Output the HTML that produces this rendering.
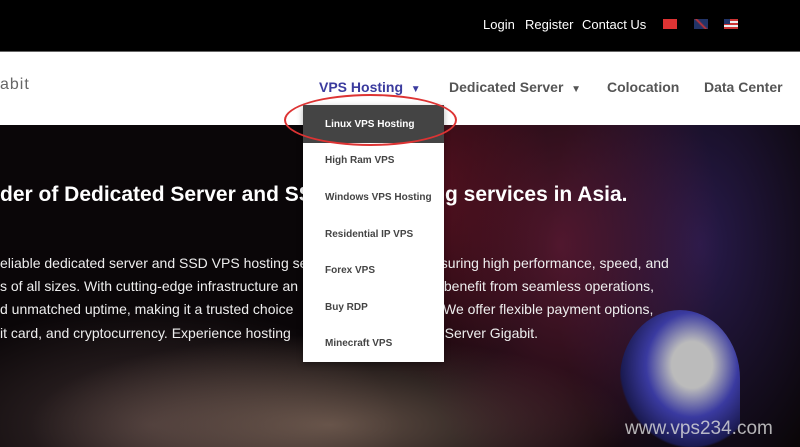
<!DOCTYPE html>
<html><head><meta charset="utf-8"><style>
*{margin:0;padding:0;box-sizing:border-box}
body{width:800px;height:447px;overflow:hidden;position:relative;font-family:"Liberation Sans",sans-serif;background:#000}
.top{position:absolute;left:0;top:0;width:800px;height:52px;background:#000;border-bottom:1px solid #666}
.top span{position:absolute;top:17px;color:#fff;font-size:13px}
.flag{position:absolute;top:19px;width:14px;height:10px}
.nav{position:absolute;left:0;top:52px;width:800px;height:73px;background:#fff}
.nav span{position:absolute;top:27px;font-size:14px;color:#555;font-weight:bold}
.hero{position:absolute;left:0;top:125px;width:800px;height:322px;
background:radial-gradient(ellipse 120px 200px at 430px 60px,rgba(120,20,40,.6),transparent),
radial-gradient(ellipse 160px 260px at 560px 120px,rgba(110,30,60,.7),transparent),
radial-gradient(ellipse 150px 260px at 700px 120px,rgba(60,40,120,.6),transparent),
radial-gradient(ellipse 300px 90px at 330px 300px,rgba(170,140,120,.55),transparent),
radial-gradient(ellipse 250px 120px at 150px 300px,rgba(90,70,70,.6),transparent),
#0a0608}
.h{position:absolute;color:#fff;font-weight:bold;font-size:21px;white-space:nowrap}
.p{position:absolute;color:#eee;font-size:14px;white-space:nowrap}
.dd{position:absolute;left:303px;top:105px;width:141px;height:257px;background:#fff;box-shadow:0 2px 6px rgba(0,0,0,.3)}
.dd div{position:absolute;left:22px;font-size:10px;color:#444;font-weight:bold}
</style></head><body>
<div class="top">
<span style="left:483px">Login</span><span style="left:525px">Register</span><span style="left:582px">Contact Us</span>
<div class="flag" style="left:663px;background:#d33"></div>
<div class="flag" style="left:694px;background:linear-gradient(45deg,#236 40%,#c33 50%,#236 60%);"></div>
<div class="flag" style="left:724px;background:repeating-linear-gradient(#c33 0 2px,#eee 2px 4px)"><div style="width:6px;height:5px;background:#236"></div></div>
</div>
<div class="nav">
<span style="left:0;color:#666;font-weight:normal;font-size:16px;letter-spacing:1px;top:24px">abit</span>
<span style="left:319px;color:#3b3b9e">VPS Hosting &nbsp;<small style="font-size:10px">▼</small></span>
<span style="left:449px">Dedicated Server &nbsp;<small style="font-size:10px">▼</small></span>
<span style="left:607px">Colocation</span>
<span style="left:704px">Data Center</span>
</div>
<div class="hero">
<div class="h" style="left:0;top:58px">der of Dedicated Server and SSD VPS</div>
<div class="h" style="left:445px;top:58px">g services in Asia.</div>
<div class="p" style="left:0;top:130px">eliable dedicated server and SSD VPS hosting se</div>
<div class="p" style="left:433px;top:130px">nsuring high performance, speed, and</div>
<div class="p" style="left:0;top:153px">s of all sizes. With cutting-edge infrastructure an</div>
<div class="p" style="left:433px;top:153px">s benefit from seamless operations,</div>
<div class="p" style="left:0;top:176px">d unmatched uptime, making it a trusted choice</div>
<div class="p" style="left:443px;top:176px">We offer flexible payment options,</div>
<div class="p" style="left:0;top:200px">it card, and cryptocurrency. Experience hosting</div>
<div class="p" style="left:433px;top:200px">e Server Gigabit.</div>
<div style="position:absolute;left:620px;top:185px;width:120px;height:137px;border-radius:50% 50% 0 0;background:radial-gradient(ellipse at 60% 40%,#bbb 0 20%,#3a3aa0 45%,#1a1a50 70%,transparent 72%)"></div>
<div style="position:absolute;left:625px;top:293px;color:#ddd;font-size:19px;opacity:.8">www.vps234.com</div>
</div>
<div class="dd">
<div style="left:0;top:0;width:141px;height:38px;background:#444"></div>
<div style="top:14px;color:#fff">Linux VPS Hosting</div>
<div style="top:50px">High Ram VPS</div>
<div style="top:87px">Windows VPS Hosting</div>
<div style="top:124px">Residential IP VPS</div>
<div style="top:160px">Forex VPS</div>
<div style="top:197px">Buy RDP</div>
<div style="top:233px">Minecraft VPS</div>
</div>
<div style="position:absolute;left:284px;top:94px;width:173px;height:52px;border:2px solid #d33;border-radius:50%"></div>
</body></html>
